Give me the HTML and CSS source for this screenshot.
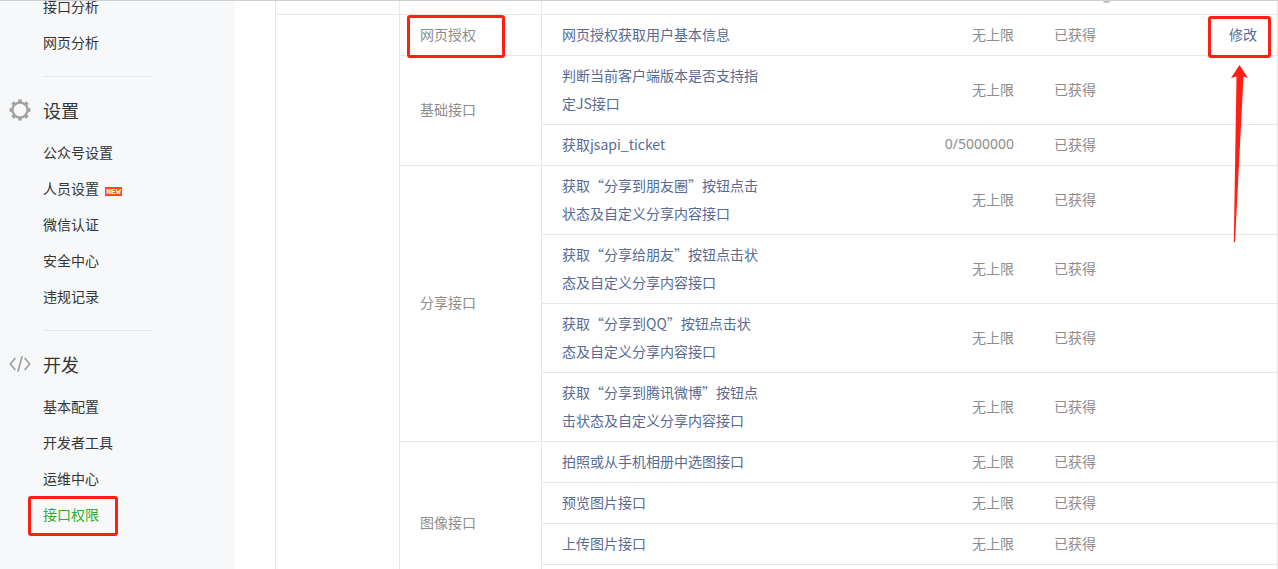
FILE: index.html
```html
<!DOCTYPE html>
<html lang="zh-CN">
<head>
<meta charset="utf-8">
<title>接口权限</title>
<link rel="stylesheet" href="styles.css">
</head>
<body>
<div class="page">
  <nav class="sidebar">
    <section class="group first">
      <a class="item">接口分析</a>
      <a class="item">网页分析</a>
    </section>
    <section class="group">
      <h3 class="title">
        <svg class="title-icon" viewBox="0 0 24 24" aria-hidden="true">
          <g fill="#a3a3a3">
            <rect x="10" y="0.5" width="4" height="3.5"/>
            <rect x="10" y="20" width="4" height="3.5"/>
            <rect x="0.5" y="10" width="3.5" height="4"/>
            <rect x="20" y="10" width="3.5" height="4"/>
            <rect x="10" y="0.5" width="4" height="3.5" transform="rotate(45 12 12)"/>
            <rect x="10" y="20" width="4" height="3.5" transform="rotate(45 12 12)"/>
            <rect x="0.5" y="10" width="3.5" height="4" transform="rotate(45 12 12)"/>
            <rect x="20" y="10" width="3.5" height="4" transform="rotate(45 12 12)"/>
          </g>
          <circle cx="12" cy="12" r="8.2" fill="none" stroke="#a3a3a3" stroke-width="2.6"/>
        </svg>
        设置
      </h3>
      <a class="item">公众号设置</a>
      <a class="item">人员设置<span class="badge">NEW</span></a>
      <a class="item">微信认证</a>
      <a class="item">安全中心</a>
      <a class="item">违规记录</a>
    </section>
    <section class="group last">
      <h3 class="title">
        <svg class="title-icon" viewBox="0 0 24 24" aria-hidden="true">
          <path d="M7 5.5 1.5 12 7 18.500M17 5.500 22.500 12 17 18.500M14.300 3.500 9.700 20.500" fill="none" stroke="#a3a3a3" stroke-width="1.900"/>
        </svg>
        开发
      </h3>
      <a class="item">基本配置</a>
      <a class="item">开发者工具</a>
      <a class="item">运维中心</a>
      <a class="item active">接口权限</a>
    </section>
  </nav>
  <main class="main">
    <table class="grid">
      <colgroup>
        <col class="c1"><col class="c2"><col class="c3"><col class="c4"><col class="c5"><col class="c6">
      </colgroup>
      <tbody>
        <tr class="stub"><td></td><td></td><td></td><td></td><td></td><td></td></tr>
        <tr>
          <td class="blank" rowspan="15"></td>
          <td class="cat">网页授权</td>
          <td class="name">网页授权获取用户基本信息</td>
          <td class="quota">无上限</td>
          <td class="state">已获得</td>
          <td class="act">修改</td>
        </tr>
        <tr>
          <td class="cat" rowspan="2">基础接口</td>
          <td class="name">判断当前客户端版本是否支持指定JS接口</td>
          <td class="quota">无上限</td><td class="state">已获得</td><td class="act"></td>
        </tr>
        <tr>
          <td class="name">获取jsapi_ticket</td>
          <td class="quota num">0/5000000</td><td class="state">已获得</td><td class="act"></td>
        </tr>
        <tr>
          <td class="cat" rowspan="4">分享接口</td>
          <td class="name">获取“分享到朋友圈”按钮点击状态及自定义分享内容接口</td>
          <td class="quota">无上限</td><td class="state">已获得</td><td class="act"></td>
        </tr>
        <tr>
          <td class="name">获取“分享给朋友”按钮点击状态及自定义分享内容接口</td>
          <td class="quota">无上限</td><td class="state">已获得</td><td class="act"></td>
        </tr>
        <tr>
          <td class="name">获取“分享到QQ”按钮点击状态及自定义分享内容接口</td>
          <td class="quota">无上限</td><td class="state">已获得</td><td class="act"></td>
        </tr>
        <tr>
          <td class="name">获取“分享到腾讯微博”按钮点击状态及自定义分享内容接口</td>
          <td class="quota">无上限</td><td class="state">已获得</td><td class="act"></td>
        </tr>
        <tr>
          <td class="cat" rowspan="4">图像接口</td>
          <td class="name">拍照或从手机相册中选图接口</td>
          <td class="quota">无上限</td><td class="state">已获得</td><td class="act"></td>
        </tr>
        <tr>
          <td class="name">预览图片接口</td>
          <td class="quota">无上限</td><td class="state">已获得</td><td class="act"></td>
        </tr>
        <tr>
          <td class="name">上传图片接口</td>
          <td class="quota">无上限</td><td class="state">已获得</td><td class="act"></td>
        </tr>
        <tr>
          <td class="name">下载图片接口</td>
          <td class="quota">无上限</td><td class="state">已获得</td><td class="act"></td>
        </tr>
      </tbody>
    </table>
  </main>
  <span class="mark"></span>
  <div class="hl hl-cat"></div>
  <div class="hl hl-act"></div>
  <div class="hl hl-nav"></div>
  <svg class="arrow" viewBox="0 0 20 178" aria-hidden="true">
    <path d="M9.500 0 18 13 13.500 11.500 5 177 3.800 177 6.500 11.500 1 13Z" fill="#ff1f14"/>
  </svg>
</div>
</body>
</html>
```

FILE: styles.css
```css
* { box-sizing: border-box; }

html, body {
  margin: 0;
  height: 100%;
  overflow: hidden;
  background: #fff;
}

body {
  font-family: "Noto Sans CJK SC", "Noto Sans", sans-serif;
  font-size: 14px;
}

.page {
  position: relative;
  display: flex;
  height: 569px;
  overflow: hidden;
  border-top: 1px solid #cfcfcf;
}

/* Sidebar */
.sidebar {
  flex: none;
  width: 235px;
  height: 568px;
  background: #f6f8f9;
  padding-left: 43px;
  overflow: hidden;
}

.group {
  width: 109px;
  border-bottom: 1px solid #e7e7eb;
  padding-bottom: 15px;
}

.group.first { margin-top: -12px; }
.group.last { border-bottom: 0; }

.title {
  position: relative;
  margin: 0;
  padding-top: 10px;
  height: 58px;
  line-height: 46px;
  font-size: 18px;
  font-weight: 400;
  color: #353535;
}

.title-icon {
  position: absolute;
  left: -34px;
  top: 22px;
  width: 22px;
  height: 22px;
}

.item {
  display: block;
  height: 36px;
  line-height: 34px;
  color: #353535;
  white-space: nowrap;
}

.item.active { color: #2fae2c; }

.badge {
  display: inline-block;
  margin-left: 6px;
  width: 17px;
  height: 9px;
  line-height: 9px;
  background: #fa4b0f;
  color: #fff;
  font-family: "Liberation Mono", monospace;
  font-size: 8px;
  font-weight: 700;
  text-align: center;
  vertical-align: 0;
}

/* Table */
.main {
  flex: 1;
  margin-left: 40px;
  min-width: 0;
}

.grid {
  width: 100%;
  table-layout: fixed;
  border-collapse: separate;
  border-spacing: 0;
  border-left: 1px solid #e7e7eb;
}

.c1 { width: 124px; }
.c2 { width: 142px; }
.c3 { width: 238px; }
.c4 { width: 254px; }
.c5 { width: 120px; }

.grid td {
  padding: 5px 20px 7px;
  line-height: 28px;
  border-bottom: 1px solid #e7e7eb;
  color: #8d8d8d;
}

.grid .cat[rowspan] { padding-top: 4px; padding-bottom: 8px; }

.grid .stub td {
  height: 14px;
  padding: 0;
  line-height: 0;
}

.grid .stub td:nth-child(1),
.grid .stub td:nth-child(2),
.grid .blank,
.grid .cat {
  border-right: 1px solid #e7e7eb;
}

.grid .blank { border-bottom: 0; }

.grid .stub td:last-child,
.grid .act {
  border-right: 1px solid #e7e7eb;
}

.grid .name { color: #576b95; }
.grid .quota { text-align: right; }
.grid .num { font-family: "Noto Sans", sans-serif; }
.grid .act { text-align: right; color: #576b95; }

/* Annotations drawn over the page */
.hl {
  position: absolute;
  border: 3px solid #ff1f14;
  border-radius: 3px;
}

.hl-cat { left: 407px; top: 14px; width: 98px; height: 43px; }
.hl-act { left: 1208px; top: 15px; width: 63px; height: 42px; }
.hl-nav { left: 28px; top: 495px; width: 90px; height: 40px; }

.arrow {
  position: absolute;
  left: 1230px;
  top: 64px;
  width: 20px;
  height: 178px;
}

.mark {
  position: absolute;
  left: 1103px;
  top: 0;
  width: 7px;
  height: 2px;
  border-radius: 0 0 4px 4px;
  background: #c4c4c4;
}
```
